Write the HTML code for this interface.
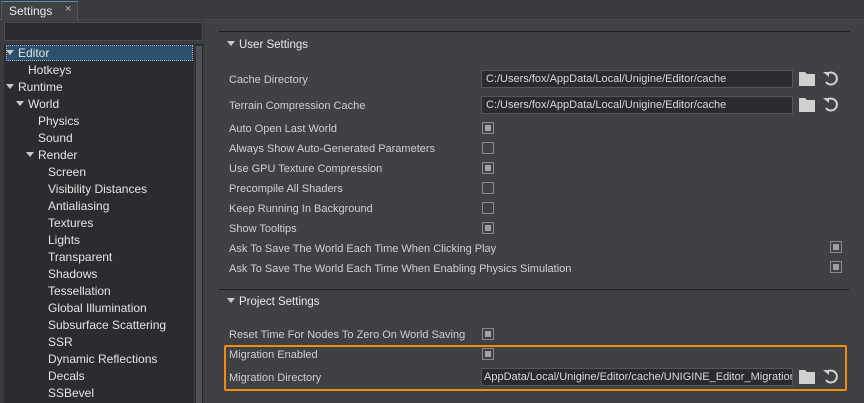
<!DOCTYPE html><html><head><style>
body{margin:0;width:864px;height:403px;overflow:hidden;background:#3b3c3f;font-family:"Liberation Sans",sans-serif;font-size:12px;color:#d4d4d4;position:relative}
.a{position:absolute}
.tri{display:inline-block;width:0;height:0;border-left:4px solid transparent;border-right:4px solid transparent;border-top:5px solid #c8c8c8;margin-right:4px;vertical-align:2px}
.cb{position:absolute;width:10px;height:10px;border:1px solid #8a8a8a;background:#404145}
.cb.on::after{content:"";position:absolute;left:2px;top:2px;width:6px;height:6px;background:#a0a0a0}
.in{position:absolute;height:18px;background:#2a2b2e;border:1px solid #55565a;color:#d8d8d8;line-height:16px;padding-left:4px;overflow:hidden;white-space:nowrap;box-sizing:border-box;font-size:11px}
.lbl{position:absolute;left:229px;font-size:11px;color:#cfcfcf;white-space:nowrap;margin-top:1px}
</style></head><body>
<div class="a" style="left:0;top:0;width:864px;height:19px;background:#393a3d;border-bottom:1px solid #4a4b4e"></div>
<div class="a" style="left:1px;top:1px;width:75px;height:19px;background:#404145;border-top:1px solid #5a8bb0;border-left:1px solid #555;border-right:1px solid #555"></div>
<div class="a" style="left:9px;top:4px;color:#e8e8e8">Settings</div>
<div class="a" style="left:65px;top:3px;color:#bbb;font-size:11px">×</div>
<div class="a" style="left:4px;top:22px;width:199px;height:19px;background:#2a2b2e;border:1px solid #4a4b4e;box-sizing:border-box"></div>
<div class="a" style="left:4px;top:44px;width:190px;height:359px;background:#2b2c2f"></div>
<div class="a" style="left:195px;top:44px;width:8px;height:359px;background:#2b2c2f"></div>
<div class="a" style="left:196px;top:46px;width:6px;height:357px;background:#505155"></div>
<div class="a" style="left:6px;top:45px;width:187px;height:16px;background:#2a506b;outline:1px dotted #aac;outline-offset:-1px"></div>
<div class="a" style="left:205px;top:20px;width:659px;height:383px;background:#404145"></div>
<div class="a" style="left:219px;top:31px;width:631px;height:1px;background:#1f2022"></div>
<div class="a" style="left:219px;top:289px;width:631px;height:1px;background:#1f2022"></div>
<div class="a" style="left:0;top:45px;color:#e4e4e4;line-height:17px;font-size:12px">
<div style="padding-left:6px"><span class="tri"></span>Editor</div>
<div style="padding-left:28px">Hotkeys</div>
<div style="padding-left:6px"><span class="tri"></span>Runtime</div>
<div style="padding-left:16px"><span class="tri"></span>World</div>
<div style="padding-left:38px">Physics</div>
<div style="padding-left:38px">Sound</div>
<div style="padding-left:26px"><span class="tri"></span>Render</div>
<div style="padding-left:48px">Screen<br>Visibility Distances<br>Antialiasing<br>Textures<br>Lights<br>Transparent<br>Shadows<br>Tessellation<br>Global Illumination<br>Subsurface Scattering<br>SSR<br>Dynamic Reflections<br>Decals<br>SSBevel</div>
</div>
<div class="a" style="left:227px;top:39px;color:#e8e8e8;font-size:11.5px"><span class="tri"></span>User Settings</div>
<div class="a" style="left:227px;top:296px;color:#e8e8e8;font-size:11.5px"><span class="tri"></span>Project Settings</div>
<div class="lbl" style="top:73px">Cache Directory</div>
<div class="lbl" style="top:99px">Terrain Compression Cache</div>
<div class="lbl" style="top:122px">Auto Open Last World</div>
<div class="lbl" style="top:142px">Always Show Auto-Generated Parameters</div>
<div class="lbl" style="top:162px">Use GPU Texture Compression</div>
<div class="lbl" style="top:182px">Precompile All Shaders</div>
<div class="lbl" style="top:202px">Keep Running In Background</div>
<div class="lbl" style="top:222px">Show Tooltips</div>
<div class="lbl" style="top:242px">Ask To Save The World Each Time When Clicking Play</div>
<div class="lbl" style="top:262px">Ask To Save The World Each Time When Enabling Physics Simulation</div>
<div class="lbl" style="top:328px">Reset Time For Nodes To Zero On World Saving</div>
<div class="lbl" style="top:348px">Migration Enabled</div>
<div class="lbl" style="top:371px">Migration Directory</div>
<div class="in" style="left:481px;top:70px;width:312px">C:/Users/fox/AppData/Local/Unigine/Editor/cache</div>
<div class="in" style="left:481px;top:96px;width:312px">C:/Users/fox/AppData/Local/Unigine/Editor/cache</div>
<div class="in" style="left:481px;top:368px;width:312px;padding-left:2px">AppData/Local/Unigine/Editor/cache/UNIGINE_Editor_Migration</div>
<div class="cb on" style="left:482px;top:122px"></div>
<div class="cb" style="left:482px;top:142px"></div>
<div class="cb on" style="left:482px;top:162px"></div>
<div class="cb" style="left:482px;top:182px"></div>
<div class="cb" style="left:482px;top:202px"></div>
<div class="cb on" style="left:482px;top:222px"></div>
<div class="cb on" style="left:830px;top:241px"></div>
<div class="cb on" style="left:830px;top:261px"></div>
<div class="cb on" style="left:482px;top:328px"></div>
<div class="cb on" style="left:482px;top:348px"></div>
<div class="a" style="left:224px;top:345px;width:619px;height:42px;border:2px solid #f28b14;border-radius:2px"></div>
<svg class="a" style="left:0;top:0" width="864" height="403">
<g fill="#d0d0d0">
<path d="M799 72h6l2 2h8v12h-16z"/><path d="M799 98h6l2 2h8v12h-16z"/><path d="M799 370h6l2 2h8v12h-16z"/>
</g>
<g fill="none" stroke="#d0d0d0" stroke-width="2">
<path d="M827 74a6 6 0 1 1 -1 8"/><path d="M827 100a6 6 0 1 1 -1 8"/><path d="M827 372a6 6 0 1 1 -1 8"/>
</g>
<g fill="#d0d0d0"><path d="M823 72h6v5z"/><path d="M823 98h6v5z"/><path d="M823 370h6v5z"/></g>
</svg>
</body></html>
